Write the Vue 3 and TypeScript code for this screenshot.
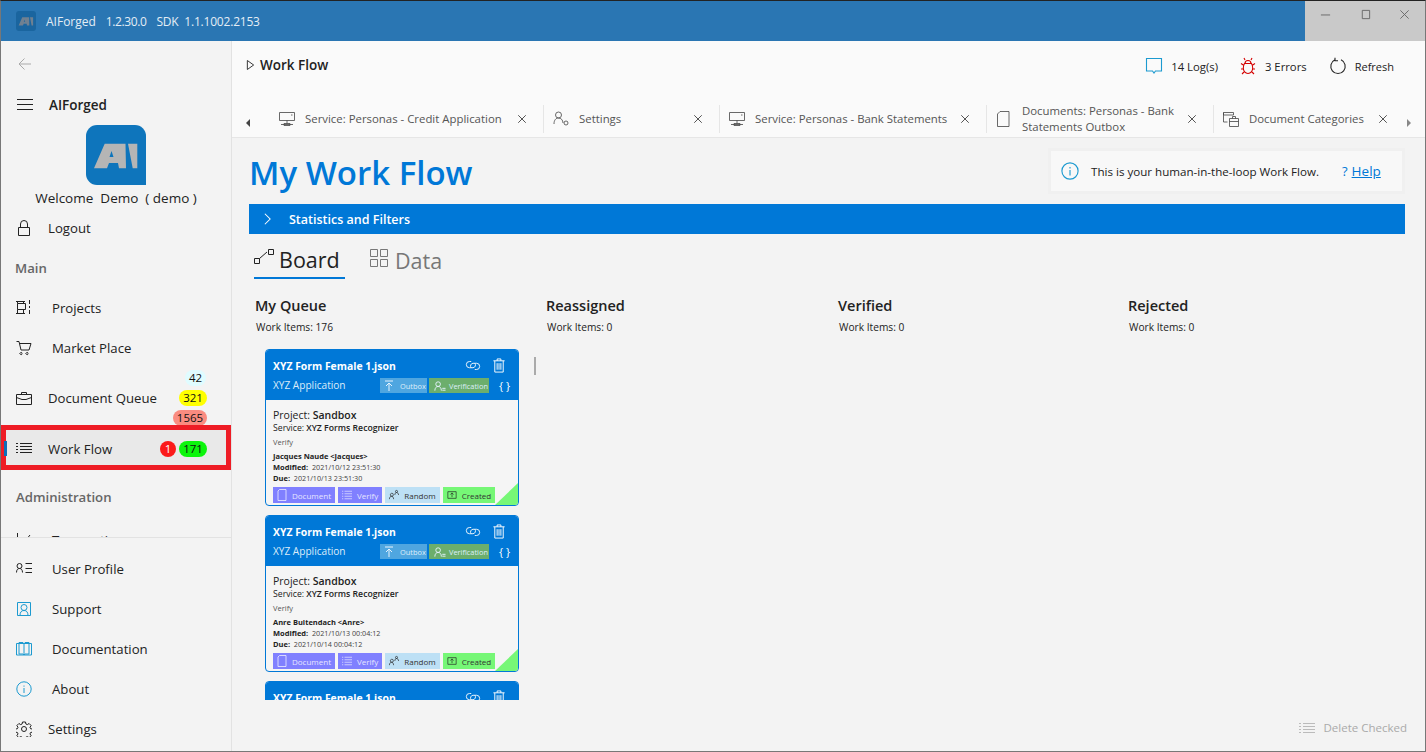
<template>
  <div class="window">
    <header class="titlebar">
      <svg viewBox="0 0 60 60" class="app-logo">
        <path class="logo-bg" d="M9 0h42a9 9 0 0 1 9 9v42a9 9 0 0 1-9 9H9a9 9 0 0 1-9-9V9a9 9 0 0 1 9-9z" />
        <path class="logo-mark" fill-rule="evenodd" :d="logoMark" />
      </svg>
      <span class="app-name">AIForged</span>
      <span class="app-ver">1.2.30.0</span>
      <span class="app-sdk">SDK&nbsp; 1.1.1002.2153</span>
      <div class="win-btns">
        <svg viewBox="0 0 12 12" class="win-ico"><path d="M1 6.500h10" /></svg>
        <svg viewBox="0 0 12 12" class="win-ico"><path d="M2.500 1.500h8v9h-8z" /></svg>
        <svg viewBox="0 0 12 12" class="win-ico"><path d="M1.500 1.500l9 9M10.500 1.500l-9 9" /></svg>
      </div>
    </header>

    <div class="body">
      <aside class="sidebar">
        <div class="nav-scroll">
          <div class="back">
            <svg viewBox="0 0 14 14" class="back-ico"><path d="M13 7H1M6.500 1.500L1 7l5.500 5.500" /></svg>
          </div>
          <div class="brand-row">
            <svg viewBox="0 0 16 16" class="ico"><path d="M0 2.500h16M0 7.500h16M0 12.500h16" /></svg>
            <span>AIForged</span>
          </div>
          <svg viewBox="0 0 60 60" class="big-logo">
            <path class="big-bg" d="M11 0h38a11 11 0 0 1 11 11v49H11A11 11 0 0 1 0 49V11A11 11 0 0 1 11 0z" />
            <path class="big-mark" fill-rule="evenodd" :d="logoMark" />
          </svg>
          <div class="welcome">Welcome&nbsp; Demo&nbsp; ( demo )</div>
          <div class="nav-item near">
            <svg viewBox="0 0 16 16" class="ico"><path :d="icons.lock" /></svg>
            <span>Logout</span>
          </div>
          <div class="nav-section first">Main</div>
          <div class="nav-item">
            <svg viewBox="0 0 16 16" class="ico"><path :d="icons.projects" /></svg>
            <span class="far">Projects</span>
          </div>
          <div class="nav-item">
            <svg viewBox="0 0 16 16" class="ico"><path :d="icons.cart" /></svg>
            <span class="far">Market Place</span>
          </div>
          <div class="nav-item queue near">
            <svg viewBox="0 0 16 16" class="ico"><path :d="icons.briefcase" /></svg>
            <span>Document Queue</span>
            <span class="badge b-blue">42</span>
            <span class="badge b-yellow">321</span>
            <span class="badge b-salmon">1565</span>
          </div>
          <div class="nav-item active near">
            <i class="active-bar"></i>
            <svg viewBox="0 0 16 16" class="ico"><path :d="icons.list" /></svg>
            <span>Work Flow</span>
            <span class="badge b-red">1</span>
            <span class="badge b-green">171</span>
          </div>
          <div class="nav-section second">Administration</div>
          <div class="nav-item clipped">
            <svg viewBox="0 0 16 16" class="ico"><path d="M1.500 1v14h14M4 10l3-4 3 2 4-5" /></svg>
            <span class="far">Transactions</span>
          </div>
        </div>
        <div class="nav-bottom">
          <div class="nav-item">
            <svg viewBox="0 0 16 16" class="ico"><path :d="icons.userList" /></svg>
            <span class="far">User Profile</span>
          </div>
          <div class="nav-item">
            <svg viewBox="0 0 16 16" class="ico cyan"><path :d="icons.support" /></svg>
            <span class="far">Support</span>
          </div>
          <div class="nav-item">
            <svg viewBox="0 0 16 16" class="ico cyan"><path :d="icons.book" /></svg>
            <span class="far">Documentation</span>
          </div>
          <div class="nav-item">
            <svg viewBox="0 0 16 16" class="ico cyan"><path :d="icons.info" /></svg>
            <span class="far">About</span>
          </div>
          <div class="nav-item near">
            <svg viewBox="0 0 16 16" class="ico"><path :d="icons.gear" /></svg>
            <span>Settings</span>
          </div>
        </div>
      </aside>

      <main class="main">
        <div class="topbar">
          <div class="crumb">
            <svg viewBox="0 0 10 12" class="crumb-ico"><path d="M1.500 1L8.500 6l-7 5z" /></svg>
            <span>Work Flow</span>
          </div>
          <div class="actions">
            <div class="action">
              <svg viewBox="0 0 18 18" class="act-ico cyan"><path d="M1.500 1.500h15v12.500h-6L9 16l-1.500-2h-6z" /></svg>
              <span>14 Log(s)</span>
            </div>
            <div class="action errors">
              <svg viewBox="0 0 18 18" class="act-ico red"><path :d="icons.bug" /></svg>
              <span>3 Errors</span>
            </div>
            <div class="action refresh">
              <svg viewBox="0 0 18 18" class="act-ico"><path d="M6 2.800A7.200 7.200 0 1 0 12 2.800M6 .8v3h3" /></svg>
              <span>Refresh</span>
            </div>
          </div>
        </div>

        <div class="tabs">
          <span class="tab-arrow left"></span>
          <div v-for="tab in tabs" :key="tab.label" class="tab" :style="{ width: tab.width + 'px' }">
            <svg viewBox="0 0 16 16" class="tab-ico"><path :d="icons[tab.icon]" /></svg>
            <span class="tab-label">{{ tab.label }}</span>
            <svg viewBox="0 0 12 12" class="tab-x"><path d="M1.500 1.500l9 9M10.500 1.500l-9 9" /></svg>
          </div>
          <span class="tab-arrow right"></span>
        </div>

        <section class="content">
          <div class="title-row">
            <h1>My Work Flow</h1>
            <div class="notice">
              <svg viewBox="0 0 16 16" class="notice-ico"><path :d="icons.info" /></svg>
              <span class="notice-text">This is your human-in-the-loop Work Flow.</span>
              <span class="notice-q">?</span>
              <a class="notice-help">Help</a>
            </div>
          </div>

          <div class="stats-bar">
            <svg viewBox="0 0 10 16" class="chev"><path d="M2 2l6 6-6 6" /></svg>
            <span>Statistics and Filters</span>
          </div>

          <div class="view-tabs">
            <div class="view-tab selected">
              <svg viewBox="0 0 20 16" class="view-ico"><path d="M.5 9.500h5v5h-5zM5.500 9.500L13 3M14.500 .5h5v5h-5z" /></svg>
              <span>Board</span>
            </div>
            <div class="view-tab">
              <svg viewBox="0 0 20 20" class="view-ico grid-ico"><path d="M1.500 1.500h7v7h-7zM11.500 1.500h7v7h-7zM1.500 11.500h7v7h-7zM11.500 11.500h7v7h-7z" /></svg>
              <span>Data</span>
            </div>
          </div>

          <div class="board">
            <div v-for="col in columns" :key="col.name" class="column">
              <div class="col-name">{{ col.name }}</div>
              <div class="col-count">Work Items: {{ col.count }}</div>
            </div>
          </div>

          <div class="card-area">
            <article v-for="(card, i) in cards" :key="i" class="card">
              <div class="card-head">
                <div class="card-line">
                  <span class="card-title">XYZ Form Female 1.json</span>
                  <svg viewBox="0 0 18 14" class="head-ico link"><path d="M7 2.500H5a3.500 3.500 0 0 0 0 7h4a3 3 0 0 0 2-5M11 11.500h2a3.500 3.500 0 0 0 0-7H9a3 3 0 0 0-2 5" /></svg>
                  <svg viewBox="0 0 14 16" class="head-ico bin"><path d="M1 3h12M5 3V1h4v2M2.500 3v12h9V3M5 5.500v7M7 5.500v7M9 5.500v7" /></svg>
                </div>
                <div class="card-line second">
                  <span class="card-sub">XYZ Application</span>
                  <span class="head-tag outbox">
                    <svg viewBox="0 0 10 12" class="tag-ico"><path d="M1 1h8M5 11V3M2 6l3-3 3 3" /></svg>Outbox
                  </span>
                  <span class="head-tag verif">
                    <svg viewBox="0 0 14 12" class="tag-ico wide"><path d="M2 11c0-3 1.500-4.500 3.500-4.500S9 8 9 11M5.500 6.500a2.500 2.500 0 1 0 0-5 2.500 2.500 0 0 0 0 5M10 8.500h3.500M10 10.500h3.500" /></svg>Verification
                  </span>
                  <span class="braces">{ }</span>
                </div>
              </div>
              <div class="card-body">
                <div class="project">Project: <span>Sandbox</span></div>
                <div class="service">Service: <span>XYZ Forms Recognizer</span></div>
                <div class="stage">Verify</div>
                <div class="person">{{ card.person }}</div>
                <div class="date"><b>Modified:</b>&nbsp; {{ card.modified }}</div>
                <div class="date"><b>Due:</b>&nbsp; {{ card.due }}</div>
                <div class="chips">
                  <span class="chip purple">
                    <svg viewBox="0 0 10 12" class="chip-ico"><path d="M2.500 .5H9v11H1V2z" /></svg>Document
                  </span>
                  <span class="chip purple">
                    <svg viewBox="0 0 12 12" class="chip-ico"><path d="M3 1.500h9M3 4.500h9M3 7.500h9M3 10.500h9M0 1.500h1.500M0 4.500h1.500M0 7.500h1.500M0 10.500h1.500" /></svg>Verify
                  </span>
                  <span class="chip sky">
                    <svg viewBox="0 0 12 12" class="chip-ico dark"><path d="M.5 11c0-2 1-3.500 2.500-3.500S5.500 9 5.500 11M3 7.500a1.800 1.800 0 1 0 0-3.500 1.800 1.800 0 0 0 0 3.500M7 6c0-2 1-3 2-3s2.500 1 2.500 3M9 3a1.200 1.200 0 1 0 0-2.500A1.200 1.200 0 0 0 9 3" /></svg>Random
                  </span>
                  <span class="chip lime">
                    <svg viewBox="0 0 12 12" class="chip-ico dark"><path d="M1 2h10v8H1zM6 8.500v-5M4 5.500l2-2 2 2" /></svg>Created
                  </span>
                </div>
              </div>
              <i class="corner"></i>
            </article>
            <div class="card-scroll"></div>
          </div>

          <div class="footer-row">
            <svg viewBox="0 0 16 12" class="del-ico"><path d="M4 1.500h12M4 4.500h12M4 7.500h12M4 10.500h12M0 1.500h2M0 4.500h2M0 7.500h2M0 10.500h2" /></svg>
            <span>Delete Checked</span>
          </div>
        </section>
      </main>
    </div>
  </div>
</template>

<script setup lang="ts">
const logoMark =
  'M8 43.300L18.700 18.700H39.500L40 43.300H33L32 38H23L21 43.300zM23.500 32H27.500L25.500 26zM42 18.700H51.300V43.300H46.700z'

const icons: Record<string, string> = {
  lock: 'M2.500 7.500h11v8h-11zM4.500 7.500V4a3.500 3.500 0 0 1 7 0v3.500',
  projects: 'M0 1.500h9M1.500 1.500v2M7.500 1.500v2M1.500 3.500h8v6h-8zM0 13.500h9M1.500 9.500v4M7.500 9.500v4M13.500 0v4M13.500 6v2M13.500 10v4',
  cart: 'M.5 1.500h2.500l2 8.500h8l2-6.500H4M6 13.500a1 1 0 1 0 0 .1M12 13.500a1 1 0 1 0 0 .1',
  briefcase: 'M.5 4.500h15v10H.5zM5.500 4.500V2.500h5v2M.5 7.500l5.500 2h4l5.500-2',
  list: 'M4 2.500h12M4 5.500h12M4 8.500h12M4 11.500h12M0 2.500h2M0 5.500h2M0 8.500h2M0 11.500h2',
  userList: 'M.5 11.500c0-3 1.500-4 3-4s3 1 3 4M3.500 7.500a2.500 2.500 0 1 0 0-5 2.500 2.500 0 0 0 0 5M9.500 2.500h6.500M9.500 7.500h6.500M9.500 11.500h6.500',
  support: 'M1.500 1.500h13v13h-13zM4 14.500c0-3.500 1.500-5 4-5s4 1.500 4 5M8 9.500a3 3 0 1 0 0-6 3 3 0 0 0 0 6',
  book: 'M.5 2.500h15V14H.5zM3 1.500h4l1 1.500 1-1.500h4V13H9l-1 1-1-1H3zM8 3v11',
  info: 'M8 .8a7.200 7.200 0 1 0 0 14.400A7.200 7.200 0 0 0 8 .8zM8 7v5M8 4.500v1.200',
  gear: 'M6.500 1h3l.4 2 1.400.6 1.800-1.100 2 2-1.100 1.800.6 1.400 2 .4v3l-2 .4-.6 1.400 1.100 1.800-2 2-1.800-1.100-1.400.6-.4 2h-3l-.4-2-1.400-.6-1.800 1.100-2-2 1.100-1.800-.6-1.400-2-.4v-3l2-.4.6-1.400-1.100-1.800 2-2 1.800 1.100 1.400-.6zM8 5.500a2.500 2.500 0 1 0 0 5 2.500 2.500 0 0 0 0-5',
  bug: 'M5.500 6.500h7c1 1.500 1.200 3 1.200 4.500 0 3-2 5.500-4.700 5.500S4.300 14 4.300 11c0-1.500.2-3 1.200-4.500zM6 6.500a3 3 0 0 1 6 0M6 3L5 1M12 3l1-2M4.300 8L2 6.500M13.700 8L16 6.500M4.300 12H2M13.700 12H16M5 15l-2 2M13 15l2 2',
  monitor: 'M.5 1.500h15v8H.5zM8 9.500v3M2 13.500h12M5 12.500h6v2H5zM12 4h1.500',
  userGear: 'M1 13c0-4 2-6 4.500-6S10 9 10 12M5.500 7a3 3 0 1 0 0-6 3 3 0 0 0 0 6M13 10a2 2 0 1 0 0 4 2 2 0 0 0 0-4',
  doc: 'M4 .5h9v15H1.500V3z',
  categories: 'M.5 1.500h10V4H.5zM.5 1.500V11h4M6.500 7.500h9v8h-9zM9.500 7.500V5.500h3v2M6.500 10.500h9',
}

const tabs = [
  { label: 'Service: Personas - Credit Application', icon: 'monitor', width: 274 },
  { label: 'Settings', icon: 'userGear', width: 176 },
  { label: 'Service: Personas - Bank Statements', icon: 'monitor', width: 267 },
  { label: 'Documents: Personas - Bank Statements Outbox', icon: 'doc', width: 227 },
  { label: 'Document Categories', icon: 'categories', width: 190 },
]

const columns = [
  { name: 'My Queue', count: 176 },
  { name: 'Reassigned', count: 0 },
  { name: 'Verified', count: 0 },
  { name: 'Rejected', count: 0 },
]

const cards = [
  { person: 'Jacques Naude <Jacques>', modified: '2021/10/12 23:51:30', due: '2021/10/13 23:51:30' },
  { person: 'Anre Buitendach <Anre>', modified: '2021/10/13 00:04:12', due: '2021/10/14 00:04:12' },
  { person: 'Anre Buitendach <Anre>', modified: '2021/10/13 00:04:12', due: '2021/10/14 00:04:12' },
]
</script>

<style>
html,
body {
  margin: 0;
  overflow: hidden;
}
</style>

<style scoped>
.window {
  width: 1426px;
  height: 752px;
  box-sizing: border-box;
  border: 1px solid #777;
  border-top-color: #222;
  display: flex;
  flex-direction: column;
  overflow: hidden;
  font-family: 'Open Sans', 'Noto Sans', sans-serif;
  color: #222;
  background: #f3f3f3;
}
.titlebar {
  height: 40px;
  flex: none;
  background: #2a76b3;
  display: flex;
  align-items: center;
  color: #e4edf5;
  font-size: 12px;
  padding-left: 15px;
}
.app-logo {
  width: 20px;
  height: 20px;
  margin-right: 10px;
}
.logo-bg {
  fill: #1a659f;
}
.logo-mark {
  fill: #6f8091;
}
.app-name {
  margin-right: 10px;
}
.app-ver {
  margin-right: 10px;
  letter-spacing: -0.4px;
}
.app-sdk {
  letter-spacing: -0.2px;
}
.win-btns {
  margin-left: auto;
  width: 120px;
  height: 100%;
  background: #c9c9c9;
  display: flex;
  justify-content: space-between;
  padding: 8px 15px 0 15px;
  box-sizing: border-box;
}
.win-ico {
  width: 11px;
  height: 11px;
  fill: none;
  stroke: #666;
  stroke-width: 1;
}
.body {
  flex: 1;
  display: flex;
  min-height: 0;
}
.sidebar {
  width: 231px;
  flex: none;
  box-sizing: border-box;
  border-right: 1px solid #e2e2e2;
  display: flex;
  flex-direction: column;
  background: #f3f3f3;
}
.nav-scroll {
  height: 496px;
  flex: none;
  overflow: hidden;
}
.nav-bottom {
  flex: 1;
  border-top: 1px solid #e2e2e2;
  padding-top: 11px;
}
.back {
  height: 49px;
  padding: 16px 0 0 17px;
  box-sizing: border-box;
}
.back-ico {
  display: block;
  fill: none;
  stroke: #a9a9a9;
  width: 14px;
  height: 14px;
}
.ico {
  width: 16px;
  height: 16px;
  fill: none;
  stroke: #222;
  stroke-width: 1;
  flex: none;
}
.ico.cyan,
.act-ico.cyan {
  stroke: #1c9ad0;
}
.brand-row {
  height: 30px;
  display: flex;
  align-items: center;
  padding-left: 16px;
  font-size: 13.500px;
  font-weight: 600;
  gap: 16px;
}
.big-logo {
  display: block;
  width: 60px;
  height: 60px;
  margin: 5px 0 0 85px;
}
.big-bg {
  fill: #0e75bc;
}
.big-mark {
  fill: #b5b5b5;
}
.welcome {
  text-align: center;
  font-size: 13.500px;
  line-height: 20px;
  margin-top: 3px;
}
.nav-item {
  height: 40px;
  display: flex;
  align-items: center;
  padding-left: 15px;
  font-size: 13.200px;
  position: relative;
  box-sizing: border-box;
}
.nav-item span.far {
  margin-left: 20px;
}
.nav-item.near > span:not(.badge) {
  margin-left: 16px;
}
.nav-section {
  font-size: 13.200px;
  font-weight: 600;
  color: #666;
  padding-left: 14px;
}
.nav-section.first {
  height: 40px;
  line-height: 40px;
}
.nav-section.second {
  height: 40px;
  line-height: 40px;
  padding-left: 15px;
  margin-top: 7px;
}
.queue {
  margin-top: 10px;
}
.active {
  background: #e9e9e9;
  outline: 5px solid #ee1c25;
  outline-offset: -5px;
  height: 45px;
  margin-top: 7px;
  padding-top: 3px;
  width: 230px;
}
.active-bar {
  position: absolute;
  left: 3px;
  top: 16px;
  width: 3px;
  height: 15px;
  background: #0e6fb8;
}
.badge {
  position: absolute;
  font-size: 11.500px;
  line-height: 16px;
  height: 16px;
  border-radius: 9px;
  text-align: center;
  color: #111;
}
.b-blue {
  right: 25px;
  top: -8px;
  width: 21px;
  background: #e0fcff;
}
.b-yellow {
  right: 24px;
  top: 12px;
  width: 28px;
  background: #ffff00;
}
.b-salmon {
  right: 24px;
  top: 32px;
  width: 34px;
  background: #fa8b80;
}
.b-red {
  right: 55px;
  top: 16px;
  width: 16px;
  background: #fb1a1a;
  color: #fff;
}
.b-green {
  right: 24px;
  top: 16px;
  width: 28px;
  background: #0cf50c;
}
.clipped {
  padding-top: 6px;
}
.main {
  flex: 1;
  min-width: 0;
  display: flex;
  flex-direction: column;
}
.topbar {
  height: 59px;
  flex: none;
  background: #fafafa;
  display: flex;
  justify-content: space-between;
  padding: 15px 31px 0 14px;
  box-sizing: border-box;
}
.crumb {
  display: flex;
  align-items: center;
  gap: 5px;
  height: 18px;
  font-size: 13.500px;
  font-weight: 600;
}
.crumb-ico {
  width: 9px;
  height: 12px;
  fill: none;
  stroke: #222;
}
.actions {
  display: flex;
  font-size: 11.300px;
  height: 20px;
}
.action {
  display: flex;
  align-items: center;
  gap: 8px;
}
.errors {
  margin-left: 21px;
}
.refresh {
  margin-left: 22px;
  font-size: 11px;
}
.act-ico {
  width: 18px;
  height: 18px;
  fill: none;
  stroke: #222;
  stroke-width: 1.100;
}
.act-ico.red {
  stroke: #d40000;
}
.tabs {
  height: 38px;
  flex: none;
  background: #fafafa;
  border-bottom: 1px solid #e6e6e6;
  display: flex;
  align-items: center;
  box-sizing: border-box;
  position: relative;
  padding: 1px 0 0 38px;
}
.tab-arrow {
  position: absolute;
  top: 19px;
  width: 0;
  height: 0;
  border-top: 4px solid transparent;
  border-bottom: 4px solid transparent;
}
.tab-arrow.left {
  left: 14px;
  border-right: 4px solid #444;
}
.tab-arrow.right {
  right: 14px;
  border-left: 4px solid #888;
}
.tab {
  height: 28px;
  display: flex;
  align-items: center;
  padding: 0 0 0 9px;
  box-sizing: border-box;
  border-right: 1px solid #e6e6e6;
  flex: none;
  font-size: 11.400px;
  color: #555;
}
.tab:last-of-type {
  border-right: none;
}
.tab-ico {
  width: 16px;
  height: 16px;
  flex: none;
  fill: none;
  stroke: #444;
  stroke-width: 0.800;
  margin-right: 10px;
}
.tab-label {
  flex: 1;
  line-height: 16px;
}
.tab-x {
  width: 10px;
  height: 10px;
  flex: none;
  fill: none;
  stroke: #333;
  margin: 0 16px 0 6px;
}
.content {
  flex: 1;
  min-height: 0;
  position: relative;
  padding: 10px 20px 0 17px;
  display: flex;
  flex-direction: column;
}
.title-row {
  display: flex;
  justify-content: space-between;
  align-items: flex-start;
  height: 56px;
}
h1 {
  margin: 0;
  font-size: 33px;
  font-weight: 600;
  color: #0078d7;
  line-height: 50px;
}
.notice {
  width: 357px;
  height: 46px;
  box-sizing: border-box;
  background: #f8f8f8;
  border: 3px solid #f0f0f0;
  display: flex;
  align-items: center;
  padding-left: 10px;
  font-size: 11.600px;
}
.notice-ico {
  width: 18px;
  height: 18px;
  fill: none;
  stroke: #1c9ad0;
  margin-right: 12px;
}
.notice-text {
  margin-right: 23px;
}
.notice-q {
  color: #0078d7;
  font-size: 13px;
  margin-right: 4px;
}
.notice-help {
  color: #0078d7;
  font-size: 13.500px;
  text-decoration: underline;
}
.stats-bar {
  height: 30px;
  flex: none;
  background: #0078d7;
  color: #fff;
  display: flex;
  align-items: center;
  font-size: 12.500px;
  font-weight: 600;
  padding-left: 14px;
  gap: 17px;
}
.chev {
  width: 9px;
  height: 14px;
  fill: none;
  stroke: #fff;
  stroke-width: 1.200;
}
.view-tabs {
  display: flex;
  margin-top: 8px;
  padding-left: 5px;
  gap: 24px;
  height: 37px;
  flex: none;
}
.view-tab {
  display: flex;
  align-items: center;
  gap: 5px;
  font-size: 21.500px;
  color: #777;
  height: 37px;
  box-sizing: border-box;
}
.view-tab.selected {
  color: #222;
  width: 91px;
  border-bottom: 2px solid #0078d7;
}
.view-ico {
  width: 20px;
  height: 16px;
  fill: none;
  stroke: #222;
  margin-bottom: 5px;
}
.grid-ico {
  height: 20px;
  stroke: #777;
  margin-right: 1px;
}
.board {
  display: grid;
  grid-template-columns: 291px 292px 290px 291px;
  padding-left: 6px;
  margin-top: 17px;
  flex: none;
}
.col-name {
  font-size: 14.500px;
  font-weight: 600;
  line-height: 20px;
}
.col-count {
  font-size: 10.200px;
  margin-top: 3px;
  padding-left: 1px;
  line-height: 16px;
}
.card-area {
  position: absolute;
  left: 33px;
  top: 211px;
  width: 300px;
  height: 351px;
  overflow: hidden;
}
.card {
  width: 254px;
  height: 157px;
  box-sizing: border-box;
  border: 1px solid #0078d7;
  border-radius: 4px;
  background: #f5f5f5;
  margin-bottom: 9px;
  position: relative;
  overflow: hidden;
}
.card-head {
  height: 50px;
  background: #0078d7;
  color: #fff;
  padding: 7px 0 0 7px;
  box-sizing: border-box;
}
.card-line {
  display: flex;
  align-items: center;
  height: 17px;
}
.card-line.second {
  margin-top: 3px;
}
.card-title {
  font-size: 10.400px;
  font-weight: 700;
  width: 192px;
}
.head-ico {
  fill: none;
  stroke: #fff;
  stroke-width: 1;
}
.link {
  width: 16px;
  height: 13px;
  margin-right: 11px;
}
.bin {
  width: 14px;
  height: 15px;
}
.card-sub {
  font-size: 10.100px;
  width: 107px;
  color: #dcecf9;
  margin-top: -2px;
}
.head-tag {
  height: 15px;
  display: flex;
  align-items: center;
  font-size: 7.400px;
  color: #dfeefa;
  padding-left: 4px;
  box-sizing: border-box;
  margin-right: 2px;
}
.outbox {
  width: 47px;
  background: #4fa6e0;
}
.verif {
  width: 60px;
  background: #6cae6c;
}
.tag-ico {
  width: 10px;
  height: 12px;
  fill: none;
  stroke: #e6f3ff;
  margin-right: 6px;
  flex: none;
}
.tag-ico.wide {
  width: 13px;
  margin-right: 3px;
}
.braces {
  margin-left: 8px;
  font-size: 11px;
}
.card-body {
  padding: 8px 0 0 7px;
}
.project {
  font-size: 10.500px;
  line-height: 14px;
}
.project span,
.service span {
  font-weight: 600;
}
.service {
  font-size: 8.700px;
  line-height: 12px;
}
.stage {
  font-size: 7.500px;
  color: #555;
  margin-top: 2px;
  line-height: 12px;
}
.person {
  font-size: 7.500px;
  font-weight: 700;
  margin-top: 3px;
  line-height: 11px;
}
.date {
  font-size: 7.200px;
  line-height: 10.500px;
  color: #444;
}
.date b {
  color: #222;
  font-size: 7.500px;
}
.chips {
  display: flex;
  gap: 3px;
  margin-top: 4px;
}
.chip {
  height: 16px;
  display: flex;
  align-items: center;
  font-size: 8px;
  padding: 0 4px;
  box-sizing: border-box;
  gap: 5px;
}
.chip.purple {
  background: #8080ff;
  color: #e6e6ff;
}
.chip.sky {
  background: #bde0f5;
  color: #333;
}
.chip.lime {
  background: #76f776;
  color: #333;
}
.chip-ico {
  width: 10px;
  height: 12px;
  fill: none;
  stroke: #eef;
  stroke-width: 0.800;
  flex: none;
}
.chip-ico.dark {
  stroke: #222;
}
.corner {
  position: absolute;
  right: 0;
  bottom: 0;
  width: 0;
  height: 0;
  border-left: 23px solid transparent;
  border-bottom: 22px solid #77f777;
}
.card-scroll {
  position: absolute;
  left: 269px;
  top: 8px;
  width: 2px;
  height: 18px;
  background: #aaa;
}
.footer-row {
  position: absolute;
  right: 18px;
  bottom: 16px;
  display: flex;
  align-items: center;
  gap: 8px;
  font-size: 11.500px;
  color: #aaa;
}
.del-ico {
  width: 16px;
  height: 12px;
  fill: none;
  stroke: #bbb;
}
</style>
